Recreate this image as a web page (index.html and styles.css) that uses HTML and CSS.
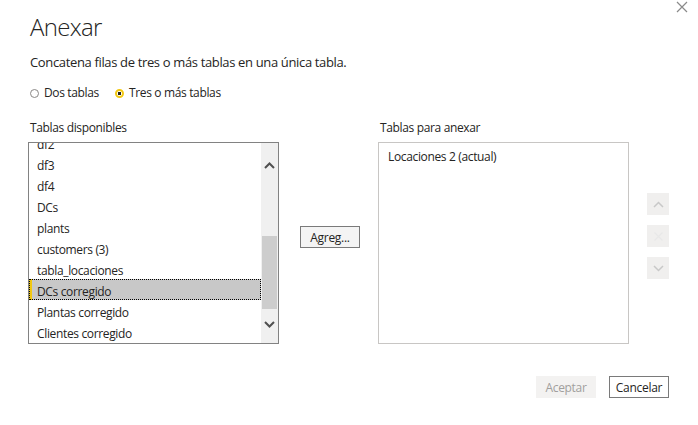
FILE: index.html
```html
<!DOCTYPE html>
<html lang="es">
<head>
<meta charset="utf-8">
<title>Anexar</title>
<link rel="stylesheet" href="styles.css">
</head>
<body>
<div class="dialog">
  <button class="close" aria-label="Cerrar">
    <svg width="12" height="12" viewBox="0 0 12 12"><path d="M1 1 L11 11 M11 1 L1 11" stroke="#8a8a8a" stroke-width="1.2" fill="none"/></svg>
  </button>
  <h1 class="title">Anexar</h1>
  <p class="subtitle">Concatena filas de tres o más tablas en una única tabla.</p>
  <div class="radios">
    <label class="radio"><span class="dot"></span>Dos tablas</label>
    <label class="radio checked"><span class="dot"></span>Tres o más tablas</label>
  </div>
  <div class="panels">
    <div class="col">
      <div class="label">Tablas disponibles</div>
      <div class="listbox dark">
        <div class="items">
          <div class="scroll">
            <div class="item">df2</div>
            <div class="item">df3</div>
            <div class="item">df4</div>
            <div class="item">DCs</div>
            <div class="item">plants</div>
            <div class="item">customers (3)</div>
            <div class="item">tabla_locaciones</div>
            <div class="item selected">DCs corregido</div>
            <div class="item">Plantas corregido</div>
            <div class="item">Clientes corregido</div>
          </div>
        </div>
        <div class="scrollbar">
          <div class="arrow">
            <svg width="11" height="7" viewBox="0 0 11 7"><path d="M1 6 L5.5 1.5 L10 6" stroke="#505050" stroke-width="2" fill="none"/></svg>
          </div>
          <div class="track"><div class="thumb"></div></div>
          <div class="arrow">
            <svg width="11" height="7" viewBox="0 0 11 7"><path d="M1 1 L5.5 5.5 L10 1" stroke="#505050" stroke-width="2" fill="none"/></svg>
          </div>
        </div>
      </div>
    </div>
    <div class="mid">
      <button class="btn add">Agreg...</button>
    </div>
    <div class="col">
      <div class="label">Tablas para anexar</div>
      <div class="listbox light">
        <div class="items pad">
          <div class="item">Locaciones 2 (actual)</div>
        </div>
      </div>
    </div>
    <div class="side">
      <button class="sbtn"><svg width="11" height="7" viewBox="0 0 11 7"><path d="M1 6 L5.5 1.5 L10 6" stroke="#c8c8c8" stroke-width="1.5" fill="none"/></svg></button>
      <button class="sbtn"><svg width="11" height="11" viewBox="0 0 11 11"><path d="M1.5 1.5 L9.5 9.5 M9.5 1.5 L1.5 9.5" stroke="#e8e8e8" stroke-width="1.2" fill="none"/></svg></button>
      <button class="sbtn"><svg width="11" height="7" viewBox="0 0 11 7"><path d="M1 1 L5.5 5.5 L10 1" stroke="#c8c8c8" stroke-width="1.5" fill="none"/></svg></button>
    </div>
  </div>
  <div class="footer">
    <button class="btn disabled">Aceptar</button>
    <button class="btn cancel">Cancelar</button>
  </div>
</div>
</body>
</html>
```
FILE: styles.css
```css
html, body {
  margin: 0;
  padding: 0;
  background: #ffffff;
}
body {
  font-family: "Open Sans", "Noto Sans", sans-serif;
  color: #252423;
  width: 698px;
  height: 425px;
  overflow: hidden;
}
.dialog {
  position: relative;
  padding: 10px 0 0 30px;
  height: 415px;
}
.close {
  position: absolute;
  top: 0;
  right: 9px;
  width: 14px;
  height: 14px;
  padding: 0;
  border: 0;
  background: none;
  display: flex;
  align-items: center;
  justify-content: center;
}
.title {
  margin: 0;
  font-weight: 300;
  font-size: 24px;
  letter-spacing: -0.7px;
  line-height: 34px;
  height: 34px;
}
.subtitle {
  margin: 9px 0 0;
  font-size: 13px;
  letter-spacing: -0.35px;
  line-height: 18px;
}
.radios {
  display: flex;
  gap: 16px;
  margin-top: 14px;
  font-size: 12px;
  letter-spacing: -0.35px;
  line-height: 16px;
}
.radio {
  display: flex;
  align-items: center;
  gap: 5px;
}
.dot {
  width: 9px;
  height: 9px;
  box-sizing: border-box;
  border: 1px solid #8a8886;
  border-radius: 50%;
  display: inline-block;
}
.radio.checked .dot {
  border: 2px solid #f2c811;
  background: radial-gradient(circle, #252423 0 1.6px, #ffffff 2px);
}
.panels {
  display: flex;
  margin-top: 19px;
  margin-left: -2px;
}
.col {
  display: flex;
  flex-direction: column;
  width: 251px;
}
.label {
  font-size: 12px;
  letter-spacing: -0.35px;
  line-height: 16px;
  height: 16px;
  padding-left: 2px;
  margin-bottom: 6px;
}
.listbox {
  box-sizing: border-box;
  height: 202px;
  display: flex;
  overflow: hidden;
  font-size: 12px;
  letter-spacing: -0.35px;
}
.listbox.dark { border: 1px solid #828282; }
.listbox.light { border: 1px solid #c8c6c4; }
.items {
  flex: 1;
  overflow: hidden;
}
.items.pad {
  padding: 2px 0 0 9px;
}
.scroll {
  margin-top: -11px;
}
.item {
  height: 21px;
  line-height: 17px;
  padding-top: 4px;
  padding-left: 8px;
  box-sizing: border-box;
  white-space: nowrap;
}
.items.pad .item { padding-left: 0; padding-top: 2px; line-height: 19px; }
.item.selected {
  background: #c8c8c8;
  outline: 1px dotted #000;
  outline-offset: -1px;
  box-shadow: inset 3px 0 0 #f2c811;
}
.scrollbar {
  width: 17px;
  background: #f0f0f0;
  display: flex;
  flex-direction: column;
}
.arrow {
  display: flex;
  align-items: center;
  justify-content: center;
}
.scrollbar .arrow:first-child { height: 30px; padding-top: 14px; box-sizing: border-box; }
.scrollbar .arrow:last-child { height: 26px; padding-bottom: 12px; box-sizing: border-box; }
.track {
  flex: 1;
  padding: 0 1px;
}
.thumb {
  margin-top: 63px;
  height: 73px;
  background: #cdcdcd;
}
.mid {
  width: 99px;
  display: flex;
  align-items: flex-start;
  padding-left: 21px;
  box-sizing: border-box;
  padding-top: 106px;
}
.btn {
  font-family: inherit;
  font-size: 12px;
  letter-spacing: -0.3px;
  color: #252423;
  background: #ffffff;
  border: 1px solid #7a7a7a;
  width: 60px;
  height: 22px;
  padding: 0;
  box-sizing: border-box;
}
.btn.add {
  background: #f4f4f4;
}
.side {
  display: flex;
  flex-direction: column;
  gap: 10px;
  padding: 73px 0 0 18px;
}
.sbtn {
  width: 22px;
  height: 22px;
  border: 0;
  padding: 0;
  background: #f0efee;
  display: flex;
  align-items: center;
  justify-content: center;
}
.footer {
  display: flex;
  justify-content: flex-end;
  gap: 13px;
  margin-top: 32px;
  padding-right: 29px;
}
.btn.disabled {
  background: #f3f2f1;
  border-color: #f3f2f1;
  color: #a19f9d;
}
.btn.cancel {
  border-color: #7a7a7a;
}
```
